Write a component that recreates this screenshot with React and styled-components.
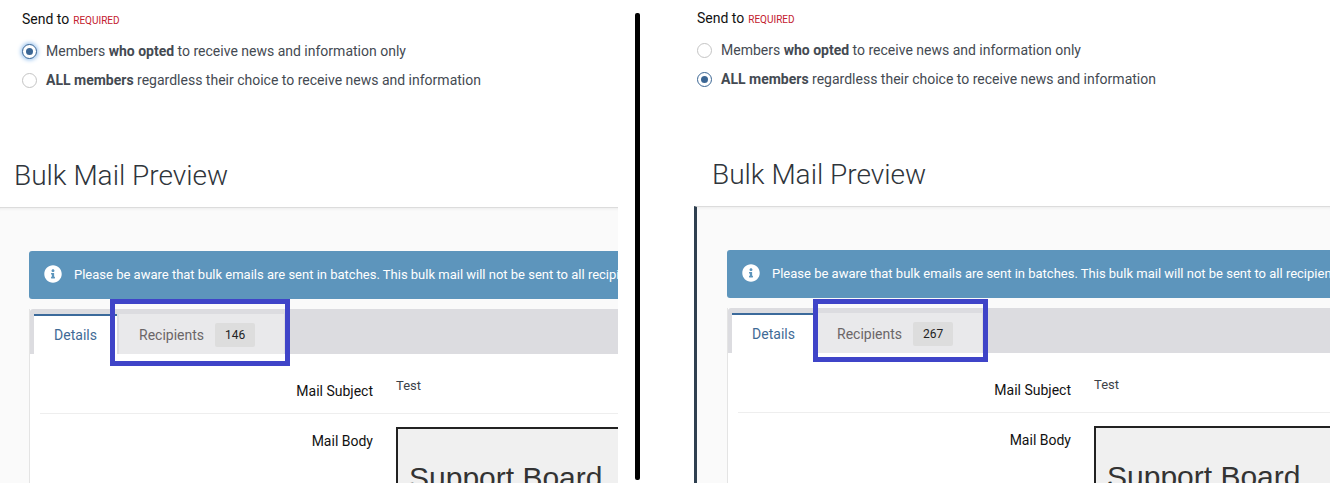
import styled, { createGlobalStyle } from "styled-components";
import { FaInfoCircle } from "react-icons/fa";

const GlobalStyle = createGlobalStyle`
  html, body {
    margin: 0;
    padding: 0;
    background: #fff;
    font-family: Roboto, "Liberation Sans", sans-serif;
  }
`;

const Page = styled.div`
  display: flex;
  align-items: flex-start;
  width: 1342px;
  height: 483px;
  overflow: hidden;
`;

const Panel = styled.section`
  position: relative;
  flex: none;
  width: ${(p) => p.$width}px;
  height: 483px;
  margin-left: ${(p) => p.$offset}px;
  padding-top: ${(p) => p.$top}px;
  box-sizing: border-box;
  overflow: hidden;
`;

const Divider = styled.div`
  flex: none;
  width: 5px;
  height: 467px;
  margin: 13px 0 0 17px;
  background: #000;
  border-radius: 2px;
`;

const SendTo = styled.div`
  height: 142px;
  padding-left: ${(p) => p.$indent}px;
`;

const SendLabel = styled.div`
  display: flex;
  align-items: baseline;
  gap: 4px;
  font-size: 14px;
  line-height: 20px;
  color: #111;
`;

const Required = styled.span`
  font-size: 10px;
  color: #c3202e;
  text-transform: uppercase;
`;

const Options = styled.div`
  display: flex;
  flex-direction: column;
  gap: 9px;
  margin-top: 10px;
`;

const Option = styled.label`
  display: flex;
  align-items: center;
  gap: 9px;
  height: 20px;
  font-size: 14px;
  color: #444a52;

  b {
    font-weight: 700;
  }
`;

const Radio = styled.span`
  display: flex;
  align-items: center;
  justify-content: center;
  flex: none;
  width: 15px;
  height: 15px;
  box-sizing: border-box;
  border-radius: 50%;
  border: 1px solid ${(p) => (p.$checked ? "#3b6694" : "#c4c4c4")};
  background: #fff;
  box-shadow: ${(p) => (p.$glow ? "0 0 4px 1px #8ebcec" : "none")};

  &::after {
    content: "";
    display: ${(p) => (p.$checked ? "block" : "none")};
    width: 7px;
    height: 7px;
    border-radius: 50%;
    background: #3b6694;
  }
`;

const Title = styled.h2`
  margin: 0;
  height: 56px;
  padding-left: ${(p) => p.$indent}px;
  font-size: 28px;
  font-weight: 300;
  line-height: 50px;
  color: #2f353b;
  box-sizing: border-box;
`;

const Preview = styled.div`
  height: 300px;
  padding: 43px 0 0 ${(p) => p.$indent}px;
  background: #fafafa;
  border-top: 1px solid #dcdcdc;
  border-left: ${(p) => (p.$accent ? "3px solid #2f4050" : "none")};
  box-shadow: inset 0 3px 3px -2px #ececec;
`;

const Alert = styled.div`
  display: flex;
  align-items: center;
  gap: 12px;
  height: 48px;
  padding: 0 0 2px 15px;
  box-sizing: border-box;
  background: #5d95bc;
  border-radius: 3px 0 0 3px;
  color: #fff;
  font-size: 13px;
  white-space: nowrap;
`;

const InfoIcon = styled(FaInfoCircle)`
  flex: none;
  width: 18px;
  height: 18px;
  color: #fff;
`;

const Card = styled.div`
  margin-top: 10px;
  background: #fff;
  border-left: 1px solid #e4e4e4;
`;

const TabBar = styled.div`
  display: flex;
  align-items: flex-end;
  height: 45px;
  padding-left: 4px;
  background: #dcdce0;
  border-radius: 3px 0 0 0;
`;

const ActiveTab = styled.div`
  display: flex;
  align-items: center;
  justify-content: center;
  width: 83px;
  height: 40px;
  box-sizing: border-box;
  background: #fff;
  border-top: 2px solid #3b6a9b;
  font-size: 14px;
  color: #3f6a96;
`;

const Tab = styled.div`
  display: flex;
  align-items: center;
  gap: 11px;
  width: 165px;
  height: 40px;
  margin-left: 2px;
  padding: 2px 0 0 20px;
  box-sizing: border-box;
  background: #e9e9eb;
  font-size: 14px;
  color: #6b6668;
`;

const Badge = styled.span`
  display: flex;
  align-items: center;
  justify-content: center;
  width: 40px;
  height: 24px;
  background: #dddddd;
  border-radius: 2px;
  font-size: 12px;
  color: #222;
`;

const Row = styled.div`
  display: flex;
  margin-left: 10px;
  height: ${(p) => p.$height}px;
  padding-top: ${(p) => p.$pad}px;
  box-sizing: border-box;
  border-bottom: ${(p) => (p.$line ? "1px solid #eeeeee" : "none")};
`;

const RowLabel = styled.div`
  flex: none;
  width: 333px;
  font-size: 14px;
  line-height: 20px;
  color: #111;
  text-align: right;
`;

const RowValue = styled.div`
  margin: -5px 0 0 23px;
  font-size: 13px;
  line-height: 20px;
  color: #3c4249;
`;

const MailBody = styled.div`
  flex: 1;
  height: 120px;
  margin: -4px 0 0 23px;
  padding: 33px 0 0 11px;
  background: #f0f0f0;
  border: 2px solid #222;
  border-right: none;
  font-family: "Liberation Sans", Arial, sans-serif;
  font-size: 30px;
  line-height: 32px;
  color: #333;
  white-space: nowrap;
`;

const Highlight = styled.div`
  position: absolute;
  left: ${(p) => p.$x}px;
  top: ${(p) => p.$y}px;
  width: ${(p) => p.$w}px;
  height: ${(p) => p.$h}px;
  box-sizing: border-box;
  border: 5px solid #3f44c8;
`;

function BulkPanel({ width, offset, top, sendIndent, titleIndent, previewIndent, accent, optedAll, glow, count, box }) {
  return (
    <Panel $width={width} $offset={offset} $top={top}>
      <SendTo $indent={sendIndent}>
        <SendLabel>
          Send to <Required>Required</Required>
        </SendLabel>
        <Options>
          <Option>
            <Radio $checked={!optedAll} $glow={glow} />
            <span>
              Members <b>who opted</b> to receive news and information only
            </span>
          </Option>
          <Option>
            <Radio $checked={optedAll} />
            <span>
              <b>ALL members</b> regardless their choice to receive news and information
            </span>
          </Option>
        </Options>
      </SendTo>
      <Title $indent={titleIndent}>Bulk Mail Preview</Title>
      <Preview $indent={previewIndent} $accent={accent}>
        <Alert>
          <InfoIcon />
          Please be aware that bulk emails are sent in batches. This bulk mail will not be sent to all recipients at once.
        </Alert>
        <Card>
          <TabBar>
            <ActiveTab>Details</ActiveTab>
            <Tab>
              Recipients <Badge>{count}</Badge>
            </Tab>
          </TabBar>
          <Row $height={60} $pad={27} $line>
            <RowLabel>Mail Subject</RowLabel>
            <RowValue>Test</RowValue>
          </Row>
          <Row $height={70} $pad={17}>
            <RowLabel>Mail Body</RowLabel>
            <MailBody>Support Board</MailBody>
          </Row>
        </Card>
      </Preview>
      <Highlight $x={box.x} $y={box.y} $w={box.w} $h={box.h} />
    </Panel>
  );
}

export default function App() {
  return (
    <Page>
      <GlobalStyle />
      <BulkPanel
        width={618}
        offset={0}
        top={9}
        sendIndent={22}
        titleIndent={14}
        previewIndent={29}
        glow
        count={146}
        box={{ x: 110, y: 299, w: 180, h: 67 }}
      />
      <Divider />
      <BulkPanel
        width={636}
        offset={54}
        top={8}
        sendIndent={3}
        titleIndent={18}
        previewIndent={30}
        accent
        optedAll
        count={267}
        box={{ x: 119, y: 299, w: 175, h: 63 }}
      />
    </Page>
  );
}
